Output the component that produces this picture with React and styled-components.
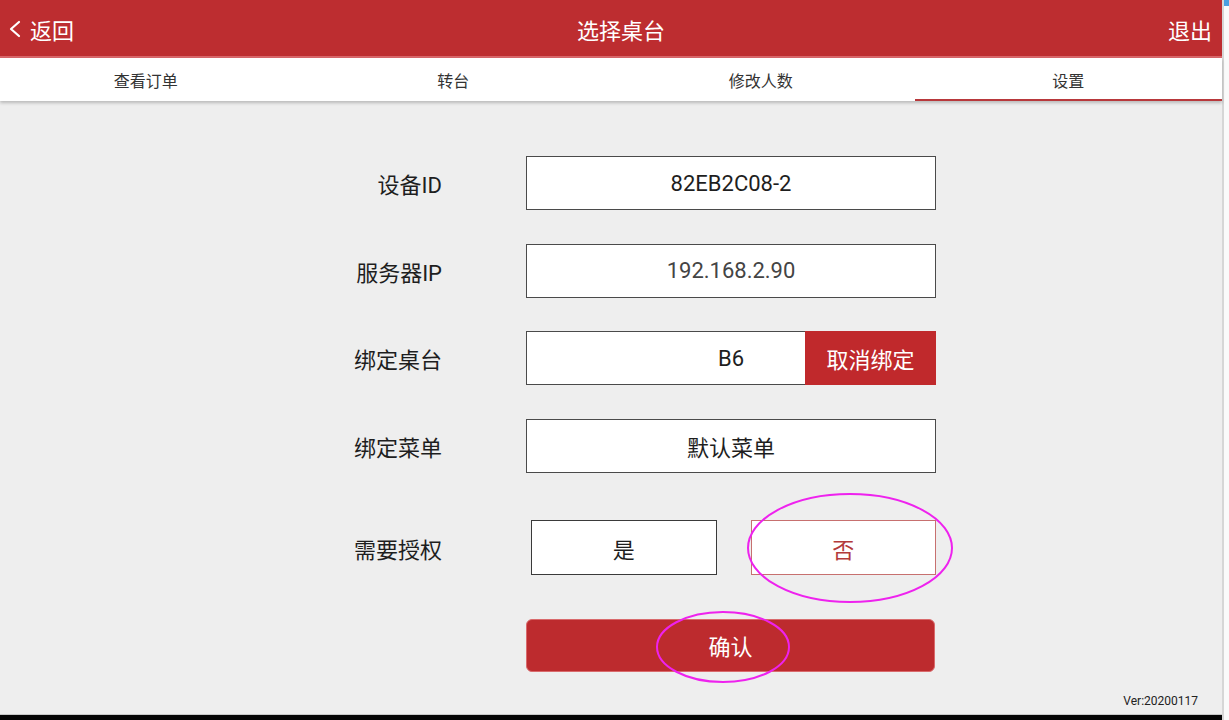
import React from 'react';
import styled, { createGlobalStyle } from 'styled-components';

const GlobalStyle = createGlobalStyle`
  html, body {
    margin: 0;
    padding: 0;
    background: #ffffff;
  }
  body {
    font-family: Roboto, "Noto Sans CJK SC", "Noto Sans", sans-serif;
  }
`;

const tabs = ['查看订单', '转台', '修改人数', '设置'];

const App = () => {
  return (
    <Page>
      <GlobalStyle />
      <Screen>
        <Header>
          <BackButton>
            <svg width="14" height="20" viewBox="0 0 14 20">
              <polyline points="11,3 3,10 11,17" fill="none" stroke="#fff" strokeWidth="2.2" strokeLinecap="round" strokeLinejoin="round" />
            </svg>
            <span>返回</span>
          </BackButton>
          <Title>选择桌台</Title>
          <HeaderAction>退出</HeaderAction>
        </Header>
        <TabBar>
          <TabGrid>
            {tabs.map((t, i) => (
              <Tab key={t} active={i === 3}>{t}</Tab>
            ))}
          </TabGrid>
        </TabBar>
        <Body>
          <Form>
            <Label>设备ID</Label>
            <Field>82EB2C08-2</Field>

            <Label>服务器IP</Label>
            <Field muted>192.168.2.90</Field>

            <Label>绑定桌台</Label>
            <Field>
              B6
              <UnbindButton>取消绑定</UnbindButton>
            </Field>

            <Label>绑定菜单</Label>
            <Field>默认菜单</Field>

            <Label spaced>需要授权</Label>
            <ChoiceRow>
              <Choice>是</Choice>
              <Choice selected>
                否
                <Mark width="212" height="114" style={{ left: -8, top: -30 }}>
                  <ellipse cx="106" cy="57" rx="102" ry="54" fill="none" stroke="#ee22ee" strokeWidth="2" />
                </Mark>
              </Choice>
            </ChoiceRow>

            <span />
            <ConfirmButton>
              <ConfirmText>
                确认
                <Mark width="138" height="76" style={{ left: -54, top: -20 }}>
                  <ellipse cx="69" cy="38" rx="66" ry="35" fill="none" stroke="#ee22ee" strokeWidth="2" />
                </Mark>
              </ConfirmText>
            </ConfirmButton>
          </Form>
          <Version>Ver:20200117</Version>
        </Body>
        <BottomBar />
      </Screen>
      <SideStrip />
    </Page>
  );
};

export default App;

const Page = styled.div`
  display: flex;
  width: 1229px;
  height: 720px;
  overflow: hidden;
`;

const Screen = styled.div`
  width: 1222px;
  display: flex;
  flex-direction: column;
  background: #eeeeee;
`;

const SideStrip = styled.div`
  flex: 1;
  background: linear-gradient(to bottom, #4a9fe0 0, #4a9fe0 6px, #fafafa 6px);
  border-left: 2px solid #d6d6d6;
`;

const Header = styled.div`
  height: 56px;
  background: #bd2d30;
  border-bottom: 2px solid #d8666a;
  display: flex;
  align-items: center;
  justify-content: space-between;
  padding: 0 10px 0 7px;
  color: #ffffff;
  font-size: 22px;
  position: relative;
`;

const BackButton = styled.div`
  display: flex;
  align-items: center;
  gap: 8px;
  padding-top: 2px;
  padding-left: 1px;
`;

const Title = styled.div`
  position: absolute;
  left: 20px;
  right: 0;
  text-align: center;
  pointer-events: none;
  padding-top: 2px;
`;

const HeaderAction = styled.div`
  padding-top: 2px;
`;

const TabBar = styled.div`
  height: 43px;
  background: #ffffff;
  box-shadow: 0 2px 3px rgba(0, 0, 0, 0.22);
  position: relative;
  z-index: 1;
  overflow: hidden;
`;

const TabGrid = styled.div`
  height: 100%;
  margin-left: -8px;
  display: grid;
  grid-template-columns: repeat(4, 1fr);
`;

const Tab = styled.div`
  display: flex;
  align-items: center;
  justify-content: center;
  font-size: 16px;
  color: #333333;
  box-sizing: border-box;
  padding-top: 3px;
  border-bottom: 2px solid ${p => (p.active ? '#b8383b' : 'transparent')};
`;

const Body = styled.div`
  flex: 1;
  display: flex;
  flex-direction: column;
  padding: 55px 0 0 242px;
  position: relative;
`;

const Form = styled.div`
  display: grid;
  grid-template-columns: 200px 410px;
  column-gap: 84px;
  row-gap: 33.5px;
  align-items: center;
`;

const Label = styled.div`
  text-align: right;
  font-size: 22px;
  color: #1e1e1e;
  margin-top: ${p => (p.spaced ? '14px' : '0')};
`;

const Field = styled.div`
  position: relative;
  height: 54px;
  box-sizing: border-box;
  border: 1px solid #4a4a4a;
  background: #ffffff;
  display: flex;
  align-items: center;
  justify-content: center;
  font-size: 22px;
  color: ${p => (p.muted ? '#444444' : '#1e1e1e')};
`;

const UnbindButton = styled.div`
  position: absolute;
  top: -1px;
  right: -1px;
  bottom: -1px;
  width: 131px;
  background: #c0292c;
  color: #ffffff;
  display: flex;
  align-items: center;
  justify-content: center;
  font-size: 22px;
`;

const ChoiceRow = styled.div`
  display: flex;
  gap: 34px;
  padding-left: 5px;
  margin-top: 14px;
`;

const Choice = styled.div`
  position: relative;
  flex: 1;
  height: 55px;
  box-sizing: border-box;
  background: #ffffff;
  border: 1px solid ${p => (p.selected ? '#c7706f' : '#3a3a3a')};
  color: ${p => (p.selected ? '#b33a3a' : '#1e1e1e')};
  display: flex;
  align-items: center;
  justify-content: center;
  font-size: 22px;
`;

const ConfirmButton = styled.div`
  height: 53px;
  margin-top: 10px;
  width: 409px;
  border-radius: 6px;
  background: #bd2b2e;
  border: 1px solid #d96a6c;
  box-sizing: border-box;
  display: flex;
  align-items: center;
  justify-content: center;
  color: #ffffff;
  font-size: 22px;
`;

const ConfirmText = styled.span`
  position: relative;
`;

const Mark = styled.svg`
  position: absolute;
  pointer-events: none;
  overflow: visible;
`;

const Version = styled.div`
  margin-top: auto;
  align-self: flex-end;
  margin-right: 24px;
  margin-bottom: 6px;
  font-size: 12px;
  color: #222222;
`;

const BottomBar = styled.div`
  height: 5px;
  background: #050505;
  border-top: 1px solid #c8c8c8;
`;
